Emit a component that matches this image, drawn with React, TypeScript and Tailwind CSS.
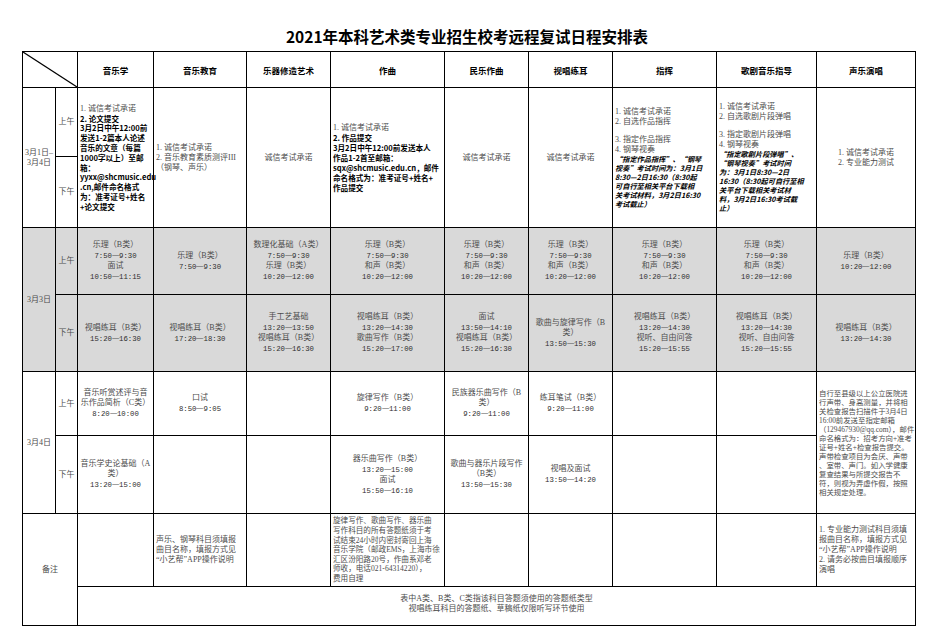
import React from "react";

const cell = "border border-black p-0 px-[2px] align-middle text-center";

function renderLine(s: string) {
  const m = s.match(/^(\d{1,2}:\d{2})—(\d{1,2}:\d{2})$/);
  if (m) {
    return (
      <>
        <span className="font-[family-name:'Liberation_Mono',monospace] text-[7.3px] text-[#2e2e2e]">{m[1]}</span>
        <span className="font-[family-name:'Noto_Sans_CJK_SC',sans-serif] inline-block scale-x-[1.1]">—</span>
        <span className="font-[family-name:'Liberation_Mono',monospace] text-[7.3px] text-[#2e2e2e]">{m[2]}</span>
      </>
    );
  }
  return s === "" ? "\u00a0" : s;
}

const L = ({ l }: { l: string[] }) => (
  <>
    {l.map((s, i) => (
      <div key={i} className="whitespace-nowrap">{renderLine(s)}</div>
    ))}
  </>
);

const std4 = ["乐理（B类）", "7:50—9:30", "和声（B类）", "10:20—12:00"];

export default function App() {
  return (
    <div className="w-[934px] h-[637px] bg-white text-[#4d4d4d] font-[family-name:'Liberation_Serif','Noto_Sans_CJK_SC',serif] text-[8px] leading-[10px]">
      <div className="h-[51px] pt-[28px] text-center text-black font-bold text-[15.5px] leading-[17px] font-[family-name:'Noto_Sans_CJK_SC',sans-serif]">
        2021年本科艺术类专业招生校考远程复试日程安排表
      </div>
      <table className="ml-[22px] w-[893px] table-fixed border-collapse">
        <colgroup>
          <col className="w-[33px]" />
          <col className="w-[22px]" />
          <col className="w-[76px]" />
          <col className="w-[93px]" />
          <col className="w-[84px]" />
          <col className="w-[114px]" />
          <col className="w-[84px]" />
          <col className="w-[84px]" />
          <col className="w-[104px]" />
          <col className="w-[100px]" />
          <col className="w-[99px]" />
        </colgroup>
        <tbody>
          <tr className="h-[36px] text-black font-bold text-[8.5px] font-[family-name:'Noto_Sans_CJK_SC',sans-serif]">
            <td colSpan={2} className="border border-black p-0 relative">
              <svg className="absolute inset-0 w-full h-full" preserveAspectRatio="none" viewBox="0 0 100 100">
                <line x1="0" y1="0" x2="100" y2="100" stroke="black" strokeWidth="1.2" vectorEffect="non-scaling-stroke" />
              </svg>
            </td>
            <td className={cell}>音乐学</td>
            <td className={cell}>音乐教育</td>
            <td className={cell}>乐器修造艺术</td>
            <td className={cell}>作曲</td>
            <td className={cell}>民乐作曲</td>
            <td className={cell}>视唱练耳</td>
            <td className={cell}>指挥</td>
            <td className={cell}>歌剧音乐指导</td>
            <td className={cell}>声乐演唱</td>
          </tr>
          {/* Row 1 */}
          <tr className="h-[69px]">
            <td rowSpan={2} className={cell}>
              <L l={["3月1日–", "3月4日"]} />
            </td>
            <td className={cell}>上午</td>
            <td rowSpan={2} className={cell + " text-left"}>
              <div className="whitespace-nowrap">1. 诚信考试承诺</div>
              <div className="text-black font-bold text-[7.6px] leading-[9.8px] font-[family-name:'Noto_Sans_CJK_SC',sans-serif]">
                <L
                  l={[
                    "2. 论文提交",
                    "3月2日中午12:00前",
                    "发送1-2篇本人论述",
                    "音乐的文章（每篇",
                    "1000字以上）至邮",
                    "箱：",
                    "yyxx@shcmusic.edu",
                    ".cn,邮件命名格式",
                    "为：准考证号+姓名",
                    "+论文提交",
                  ]}
                />
              </div>
            </td>
            <td rowSpan={2} className={cell + " text-left"}>
              <L l={["1.  诚信考试承诺", "2.  音乐教育素质测评III", "（钢琴、声乐）"]} />
            </td>
            <td rowSpan={2} className={cell}>诚信考试承诺</td>
            <td rowSpan={2} className={cell + " text-left"}>
              <div className="whitespace-nowrap">1. 诚信考试承诺</div>
              <div className="text-black font-bold text-[7.6px] leading-[10px] font-[family-name:'Noto_Sans_CJK_SC',sans-serif]">
                <L
                  l={[
                    "2. 作品提交",
                    "3月2日中午12:00前发送本人",
                    "作品1-2首至邮箱：",
                    "sqx@shcmusic.edu.cn，邮件",
                    "命名格式为：准考证号+姓名+",
                    "作品提交",
                  ]}
                />
              </div>
            </td>
            <td rowSpan={2} className={cell}>诚信考试承诺</td>
            <td rowSpan={2} className={cell}>诚信考试承诺</td>
            <td rowSpan={2} className={cell + " text-left"}>
              <L l={["1. 诚信考试承诺", "2. 自选作品指挥"]} />
              <div className="h-[8px]" />
              <L l={["3. 指定作品指挥", "4. 钢琴视奏"]} />
              <div className="text-black font-bold italic text-[7.2px] leading-[9px] font-[family-name:'Noto_Sans_CJK_SC',sans-serif]">
                <L
                  l={[
                    "“指定作品指挥”、“钢琴",
                    "视奏”考试时间为：3月1日",
                    "8:30—2日16:30（8:30起",
                    "可自行至相关平台下载相",
                    "关考试材料，3月2日16:30",
                    "考试截止）",
                  ]}
                />
              </div>
            </td>
            <td rowSpan={2} className={cell + " text-left"}>
              <L l={["1. 诚信考试承诺", "2. 自选歌剧片段弹唱"]} />
              <div className="h-[8px]" />
              <L l={["3. 指定歌剧片段弹唱", "4. 钢琴视奏"]} />
              <div className="text-black font-bold italic text-[7.2px] leading-[9px] font-[family-name:'Noto_Sans_CJK_SC',sans-serif]">
                <L
                  l={[
                    "“指定歌剧片段弹唱”、",
                    "“钢琴视奏”考试时间",
                    "为：3月1日8:30—2日",
                    "16:30（8:30起可自行至相",
                    "关平台下载相关考试材",
                    "料，3月2日16:30考试截",
                    "止）",
                  ]}
                />
              </div>
            </td>
            <td rowSpan={2} className={cell}>
              <div className="inline-block text-left">
                <L l={["1. 诚信考试承诺", "2. 专业能力测试"]} />
              </div>
            </td>
          </tr>
          <tr className="h-[71px]">
            <td className={cell}>下午</td>
          </tr>
          {/* Row 2 */}
          <tr className="h-[67px] bg-[#d9d9d9]">
            <td rowSpan={2} className={cell}>3月3日</td>
            <td className={cell}>上午</td>
            <td className={cell}><L l={["乐理（B类）", "7:50—9:30", "面试", "10:50—11:15"]} /></td>
            <td className={cell}><L l={["乐理（B类）", "7:50—9:30"]} /></td>
            <td className={cell}><L l={["数理化基础（A类）", "7:50—9:30", "乐理（B类）", "10:20—12:00"]} /></td>
            <td className={cell}><L l={std4} /></td>
            <td className={cell}><L l={std4} /></td>
            <td className={cell}><L l={std4} /></td>
            <td className={cell}><L l={std4} /></td>
            <td className={cell}><L l={std4} /></td>
            <td className={cell}><L l={["乐理（B类）", "10:20—12:00"]} /></td>
          </tr>
          <tr className="h-[77px] bg-[#d9d9d9]">
            <td className={cell}>下午</td>
            <td className={cell}><L l={["视唱练耳（B类）", "15:20—16:30"]} /></td>
            <td className={cell}><L l={["视唱练耳（B类）", "17:20—18:30"]} /></td>
            <td className={cell}><L l={["手工艺基础", "13:20—13:50", "视唱练耳（B类）", "15:20—16:30"]} /></td>
            <td className={cell}><L l={["视唱练耳（B类）", "13:20—14:30", "歌曲写作（B类）", "15:20—17:00"]} /></td>
            <td className={cell}><L l={["面试", "13:50—14:10", "视唱练耳（B类）", "15:20—16:30"]} /></td>
            <td className={cell}><L l={["歌曲与旋律写作（B", "类）", "13:50—15:30"]} /></td>
            <td className={cell}><L l={["视唱练耳（B类）", "13:20—14:30", "视听、自由问答", "15:20—15:55"]} /></td>
            <td className={cell}><L l={["视唱练耳（B类）", "13:20—14:30", "视听、自由问答", "15:20—15:55"]} /></td>
            <td className={cell}><L l={["视唱练耳（B类）", "13:20—14:30"]} /></td>
          </tr>
          {/* Row 3 */}
          <tr className="h-[64px]">
            <td rowSpan={2} className={cell}>3月4日</td>
            <td className={cell}>上午</td>
            <td className={cell}><L l={["音乐听赏述评与音", "乐作品简析（C类）", "8:20—10:00"]} /></td>
            <td className={cell}><L l={["口试", "8:50—9:05"]} /></td>
            <td className={cell}></td>
            <td className={cell}><L l={["旋律写作（B类）", "9:20—11:00"]} /></td>
            <td className={cell}><L l={["民族器乐曲写作（B", "类）", "9:20—11:00"]} /></td>
            <td className={cell}><L l={["练耳笔试（B类）", "9:20—11:00"]} /></td>
            <td className={cell}></td>
            <td className={cell}></td>
            <td rowSpan={2} className={cell + " text-left text-[7.4px] leading-[9px]"}>
              <L
                l={[
                  "自行至县级以上公立医院进",
                  "行声带、身高测量，并将相",
                  "关检查报告扫描件于3月4日",
                  "16:00前发送至指定邮箱",
                  "（129467930@qq.com），邮件",
                  "命名格式为：招考方向+准考",
                  "证号+姓名+检查报告提交。",
                  "声带检查项目为会厌、声带",
                  "、室带、声门。如入学健康",
                  "复查结果与所提交报告不",
                  "符，则视为弄虚作假，按照",
                  "相关规定处理。",
                ]}
              />
            </td>
          </tr>
          <tr className="h-[78px]">
            <td className={cell}>下午</td>
            <td className={cell}><L l={["音乐学史论基础（A", "类）", "13:20—15:00"]} /></td>
            <td className={cell}></td>
            <td className={cell}></td>
            <td className={cell}><L l={["器乐曲写作（B类）", "13:20—15:00", "面试", "15:50—16:10"]} /></td>
            <td className={cell}><L l={["歌曲与器乐片段写作", "（B类）", "13:50—15:30"]} /></td>
            <td className={cell}><L l={["视唱及面试", "13:50—14:20"]} /></td>
            <td className={cell}></td>
            <td className={cell}></td>
          </tr>
          {/* Notes */}
          <tr className="h-[73px]">
            <td colSpan={2} rowSpan={2} className={cell}>备注</td>
            <td className={cell}></td>
            <td className={cell + " text-left"}>
              <L l={["声乐、钢琴科目须填报", "曲目名称，填报方式见", "“小艺帮”APP操作说明"]} />
            </td>
            <td className={cell}></td>
            <td className={cell + " text-left text-[7.6px] leading-[9.6px]"}>
              <L
                l={[
                  "旋律写作、歌曲写作、器乐曲",
                  "写作科目的所有答题纸须于考",
                  "试结束24小时内密封寄回上海",
                  "音乐学院（邮政EMS，上海市徐",
                  "汇区汾阳路20号，作曲系邓老",
                  "师收，电话021-64314220），",
                  "费用自理",
                ]}
              />
            </td>
            <td className={cell}></td>
            <td className={cell}></td>
            <td className={cell}></td>
            <td className={cell}></td>
            <td className={cell + " text-left"}>
              <L
                l={[
                  "1. 专业能力测试科目须填",
                  "报曲目名称，填报方式见",
                  "“小艺帮”APP操作说明",
                  "2. 请务必按曲目填报顺序",
                  "演唱",
                ]}
              />
            </td>
          </tr>
          <tr className="h-[39px]">
            <td colSpan={9} className={cell + " pb-[4px]"}>
              <L l={["表中A类、B类、C类指该科目答题须使用的答题纸类型", "视唱练耳科目的答题纸、草稿纸仅限听写环节使用"]} />
            </td>
          </tr>
        </tbody>
      </table>
    </div>
  );
}
